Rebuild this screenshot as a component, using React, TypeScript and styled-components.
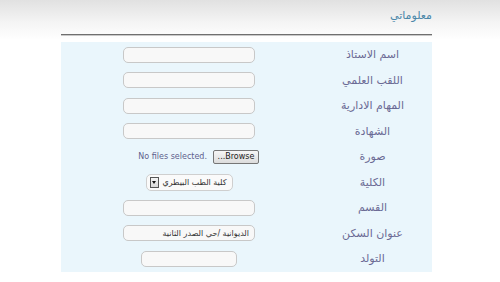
import React from "react";
import styled, { createGlobalStyle } from "styled-components";

/* ---------------- global ---------------- */

const GlobalStyle = createGlobalStyle`
  html, body {
    margin: 0;
    padding: 0;
  }
  body {
    width: 500px;
    height: 282px;
    overflow: hidden;
    background: linear-gradient(to bottom, #e1e1e1 0px, #f4f4f4 22px, #ffffff 40px);
    font-family: "DejaVu Sans", Tahoma, sans-serif;
  }
`;

/* ---------------- layout ---------------- */

const Page = styled.div`
  direction: rtl;
  width: 371px;
  margin-left: 61px;
`;

const Header = styled.div`
  height: 34px;
  display: flex;
  align-items: center;
  padding-bottom: 4px;
  box-sizing: border-box;
`;

const Title = styled.h2`
  margin: 0;
  font-size: 11px;
  font-weight: normal;
  color: #4a87a9;
`;

const Rule = styled.hr`
  margin: 0 0 6px;
  height: 0;
  border: 0;
  border-top: 1px solid #6f6f6f;
  border-bottom: 1px solid #c9c9c9;
`;

const Panel = styled.div`
  background: #eaf6fc;
  display: grid;
  grid-template-columns: 119px 1fr;
  grid-auto-rows: 25.5px;
`;

const Label = styled.div`
  display: flex;
  align-items: center;
  justify-content: center;
  font-size: 11px;
  color: #6a6a94;
`;

const Cell = styled.div`
  display: flex;
  align-items: center;
  justify-content: center;
  padding-left: 4px;
`;

/* ---------------- fields ---------------- */

const TextBox = styled.div<{ $w?: number }>`
  width: ${(p) => p.$w ?? 132}px;
  height: 16px;
  box-sizing: border-box;
  border: 1px solid #c8c8c8;
  border-radius: 5px;
  background: #f8f8f8;
  font-size: 8px;
  color: #333;
  display: flex;
  align-items: center;
  padding: 0 5px;
`;

const FileBox = styled.div`
  width: 140px;
  display: flex;
  align-items: center;
  gap: 6px;
`;

const BrowseButton = styled.div`
  width: 46px;
  height: 14px;
  box-sizing: border-box;
  border: 1px solid #767676;
  border-radius: 2px;
  background: linear-gradient(to bottom, #f6f6f6, #dcdcdc);
  font-size: 8px;
  color: #222;
  display: flex;
  align-items: center;
  justify-content: center;
`;

const FileHint = styled.span`
  direction: ltr;
  font-size: 8px;
  color: #5f5f8c;
`;

const SelectBox = styled.div`
  width: 87px;
  height: 17px;
  box-sizing: border-box;
  border: 1px solid #cfcfcf;
  border-radius: 5px;
  background: #fafafa;
  display: flex;
  align-items: center;
  justify-content: space-between;
  padding: 0 5px 0 3px;
  font-size: 8px;
  color: #333;
`;

const Arrow = styled.span`
  width: 9px;
  height: 11px;
  box-sizing: border-box;
  border: 1px solid #555;
  background: linear-gradient(to bottom, #f4f4f4, #d8d8d8);
  display: flex;
  align-items: center;
  justify-content: center;

  &::after {
    content: "";
    border-left: 2.5px solid transparent;
    border-right: 2.5px solid transparent;
    border-top: 3px solid #111;
  }
`;

/* ---------------- page ---------------- */

type Row = { label: string; field: React.ReactNode };

const rows: Row[] = [
  { label: "اسم الاستاذ", field: <TextBox /> },
  { label: "اللقب العلمي", field: <TextBox /> },
  { label: "المهام الادارية", field: <TextBox /> },
  { label: "الشهادة", field: <TextBox /> },
  {
    label: "صورة",
    field: (
      <FileBox>
        <BrowseButton>Browse...</BrowseButton>
        <FileHint>No files selected.</FileHint>
      </FileBox>
    ),
  },
  {
    label: "الكلية",
    field: (
      <SelectBox>
        <span>كلية الطب البيطري</span>
        <Arrow />
      </SelectBox>
    ),
  },
  { label: "القسم", field: <TextBox /> },
  { label: "عنوان السكن", field: <TextBox>الديوانية /حي الصدر الثانية</TextBox> },
  { label: "التولد", field: <TextBox $w={96} /> },
];

export default function App() {
  return (
    <>
      <GlobalStyle />
      <Page>
        <Header>
          <Title>معلوماتي</Title>
        </Header>
        <Rule />
        <Panel>
          {rows.map((r) => (
            <React.Fragment key={r.label}>
              <Label>{r.label}</Label>
              <Cell>{r.field}</Cell>
            </React.Fragment>
          ))}
        </Panel>
      </Page>
    </>
  );
}
